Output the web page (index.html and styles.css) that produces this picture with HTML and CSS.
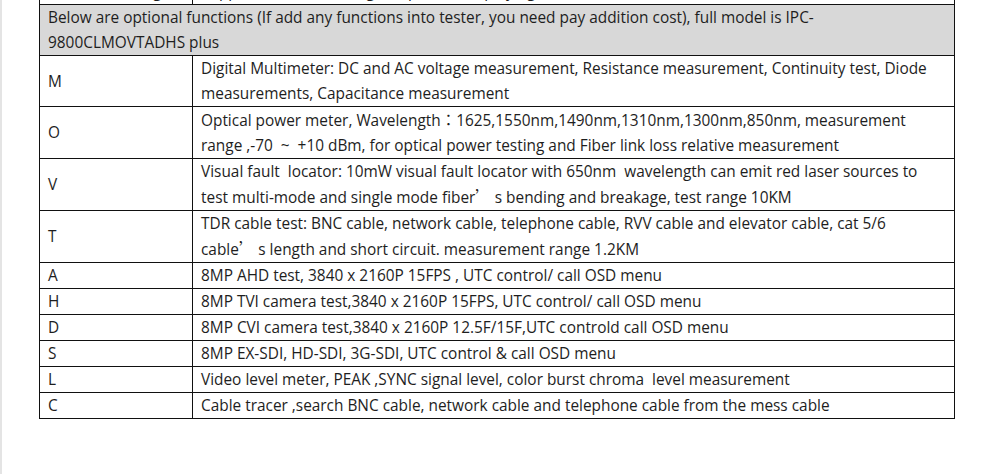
FILE: index.html
```html
<!DOCTYPE html>
<html>
<head>
<meta charset="utf-8">
<link rel="stylesheet" href="styles.css">
</head>
<body>
<div class="page">
  <div class="clip">
    <table class="spec">
      <colgroup><col class="c1"><col class="c2"></colgroup>
      <tr class="prev"><td>Video recording</td><td>Support video recording, snapshot and playing</td></tr>
      <tr class="head"><td colspan="2">Below are optional functions (If add any functions into tester, you need pay addition cost), full model is IPC-9800CLMOVTADHS plus</td></tr>
      <tr><td>M</td><td>Digital Multimeter: DC and AC voltage measurement, Resistance measurement, Continuity test, Diode measurements, Capacitance measurement</td></tr>
      <tr><td>O</td><td>Optical power meter, Wavelength<span class="cjk">：</span>1625,1550nm,1490nm,1310nm,1300nm,850nm, measurement range ,-70&nbsp; ~&nbsp; +10 dBm, for optical power testing and Fiber link loss relative measurement</td></tr>
      <tr><td>V</td><td>Visual fault&nbsp; locator: 10mW visual fault locator with 650nm&nbsp; wavelength can emit red laser sources to test multi-mode and single mode <span class="nw">fiber<span class="cjk">’</span>&nbsp;s</span> bending and breakage, test range 10KM</td></tr>
      <tr><td>T</td><td>TDR cable test: BNC cable, network cable, telephone cable, RVV cable and elevator cable, cat 5/6 <span class="nw">cable<span class="cjk">’</span>&nbsp;s</span> length and short circuit. measurement range 1.2KM</td></tr>
      <tr><td>A</td><td>8MP AHD test, 3840 x 2160P 15FPS , UTC control/ call OSD menu</td></tr>
      <tr><td>H</td><td>8MP TVI camera test,3840 x 2160P 15FPS, UTC control/ call OSD menu</td></tr>
      <tr><td>D</td><td>8MP CVI camera test,3840 x 2160P 12.5F/15F,UTC controld call OSD menu</td></tr>
      <tr><td>S</td><td>8MP EX-SDI, HD-SDI, 3G-SDI, UTC control &amp; call OSD menu</td></tr>
      <tr><td>L</td><td>Video level meter, PEAK ,SYNC signal level, color burst chroma&nbsp; level measurement</td></tr>
      <tr><td>C</td><td>Cable tracer ,search BNC cable, network cable and telephone cable from the mess cable</td></tr>
    </table>
  </div>
</div>
</body>
</html>
```
FILE: styles.css
```css
html, body {
  margin: 0;
  padding: 0;
  background: #fff;
}
body {
  height: 474px;
  border-left: 2px solid #e4e4e4;
  box-sizing: border-box;
}
.page {
  padding-left: 37px;
  width: 916px;
}
.clip {
  overflow: hidden;
}
.spec {
  border-collapse: collapse;
  width: 916px;
  margin-top: -22px;
  font-family: "Open Sans", "Noto Sans", sans-serif;
  font-size: 15.4px;
  line-height: 25px;
  color: #1e1e1e;
}
.c1 { width: 153px; }
.spec td {
  border: 1px solid #111;
  padding: 0 8px;
  vertical-align: middle;
  text-align: left;
}
.prev td {
  height: 25px;
}
.head td {
  background: #d8d8d8;
}
.cjk {
  font-family: "Noto Sans CJK TC", sans-serif;
}
.nw {
  white-space: nowrap;
}
```
